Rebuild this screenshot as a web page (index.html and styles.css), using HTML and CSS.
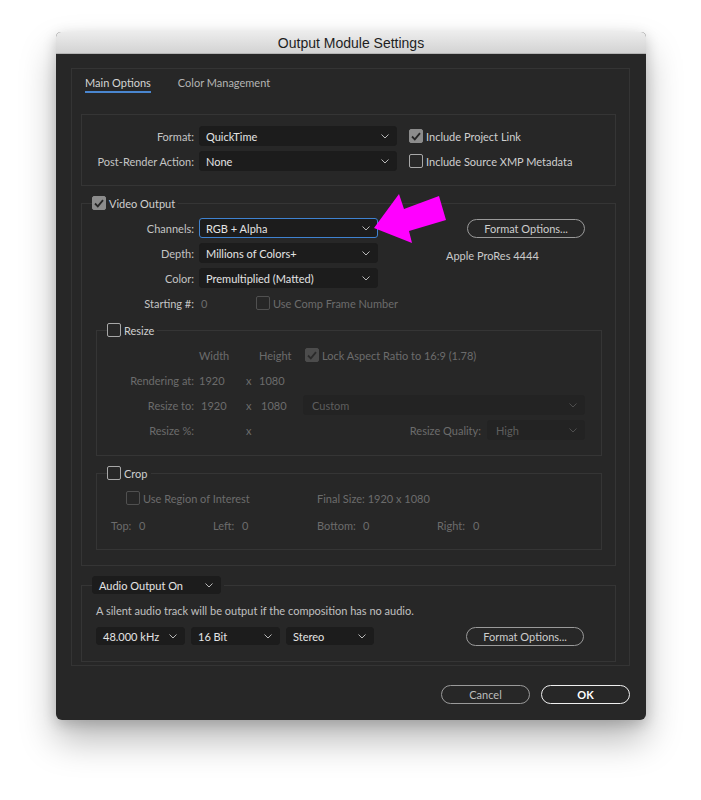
FILE: index.html
```html
<!DOCTYPE html>
<html>
<head>
<meta charset="utf-8">
<link rel="stylesheet" href="styles.css">
</head>
<body>
<div class="window">
  <div class="titlebar">Output Module Settings</div>
  <div class="wbody">
    <div class="panel">
      <div class="tabs">
        <span class="tab active">Main Options</span>
        <span class="tab">Color Management</span>
      </div>

      <div class="box1">
        <div class="row">
          <span class="lbl w112">Format:</span>
          <div class="select w198"><span>QuickTime</span><svg class="chev" width="8" height="5" viewBox="0 0 8 5"><polyline points="0.5,0.5 4,4 7.5,0.5"/></svg></div>
          <span class="cb checked ml12"><svg width="10" height="9" viewBox="0 0 10 9"><polyline points="1,4.5 3.8,7.3 9,1.2"/></svg></span>
          <span class="cbtext">Include Project Link</span>
        </div>
        <div class="row mt5">
          <span class="lbl w112">Post-Render Action:</span>
          <div class="select w198"><span>None</span><svg class="chev" width="8" height="5" viewBox="0 0 8 5"><polyline points="0.5,0.5 4,4 7.5,0.5"/></svg></div>
          <span class="cb ml12"></span>
          <span class="cbtext">Include Source XMP Metadata</span>
        </div>
      </div>

      <fieldset class="fs video">
        <legend class="lg">
          <span class="cb checked"><svg width="10" height="9" viewBox="0 0 10 9"><polyline points="1,4.5 3.8,7.3 9,1.2"/></svg></span>
          <span class="cbtext">Video Output</span>
        </legend>
        <div class="vo-top">
          <div class="vo-left">
            <div class="row">
              <span class="lbl w102">Channels:</span>
              <div class="select w179 focus"><span>RGB + Alpha</span><svg class="chev" width="8" height="5" viewBox="0 0 8 5"><polyline points="0.5,0.5 4,4 7.5,0.5"/></svg></div>
            </div>
            <div class="row mt5">
              <span class="lbl w102">Depth:</span>
              <div class="select w179"><span>Millions of Colors+</span><svg class="chev" width="8" height="5" viewBox="0 0 8 5"><polyline points="0.5,0.5 4,4 7.5,0.5"/></svg></div>
            </div>
            <div class="row mt5">
              <span class="lbl w102">Color:</span>
              <div class="select w179"><span>Premultiplied (Matted)</span><svg class="chev" width="8" height="5" viewBox="0 0 8 5"><polyline points="0.5,0.5 4,4 7.5,0.5"/></svg></div>
            </div>
            <div class="row mt5">
              <span class="lbl w102">Starting #:</span>
              <span class="dim start0">0</span>
              <span class="cb dis"></span>
              <span class="cbtext dim">Use Comp Frame Number</span>
            </div>
          </div>
          <div class="vo-right">
            <div class="btn fmt">Format Options...</div>
            <div class="prores">Apple ProRes 4444</div>
          </div>
        </div>

        <fieldset class="fs sub resize">
          <legend class="lg">
            <span class="cb"></span>
            <span class="cbtext">Resize</span>
          </legend>
          <div class="row">
            <span class="lbl w87"></span>
            <span class="c-w dim">Width</span>
            <span class="c-x"></span>
            <span class="c-h dim">Height</span>
            <span class="cb dis checked"><svg width="10" height="9" viewBox="0 0 10 9"><polyline points="1,4.5 3.8,7.3 9,1.2"/></svg></span>
            <span class="cbtext dim">Lock Aspect Ratio to 16:9 (1.78)</span>
          </div>
          <div class="row mt5">
            <span class="lbl w87 dim">Rendering at:</span>
            <span class="c-w dim">1920</span>
            <span class="c-x dim">x</span>
            <span class="c-h dim">1080</span>
          </div>
          <div class="row mt5">
            <span class="lbl w87 dim">Resize to:</span>
            <span class="c-w dim in">1920</span>
            <span class="c-x dim">x</span>
            <span class="c-h dim in">1080</span>
            <div class="select dsel custom"><span>Custom</span><svg class="chev" width="8" height="5" viewBox="0 0 8 5"><polyline points="0.5,0.5 4,4 7.5,0.5"/></svg></div>
          </div>
          <div class="row mt5">
            <span class="lbl w87 dim">Resize %:</span>
            <span class="c-w"></span>
            <span class="c-x dim">x</span>
            <span class="lbl rq dim">Resize Quality:</span>
            <div class="select dsel high"><span>High</span><svg class="chev" width="8" height="5" viewBox="0 0 8 5"><polyline points="0.5,0.5 4,4 7.5,0.5"/></svg></div>
          </div>
        </fieldset>

        <fieldset class="fs sub crop">
          <legend class="lg">
            <span class="cb"></span>
            <span class="cbtext">Crop</span>
          </legend>
          <div class="row">
            <div class="roi">
              <span class="cb dis"></span>
              <span class="cbtext dim">Use Region of Interest</span>
            </div>
            <span class="dim">Final Size: 1920 x 1080</span>
          </div>
          <div class="row mt7">
            <div class="ci ci1"><span class="cl l1 dim">Top:</span><span class="dim">0</span></div>
            <div class="ci ci2"><span class="cl l2 dim">Left:</span><span class="dim">0</span></div>
            <div class="ci ci3"><span class="cl l3 dim">Bottom:</span><span class="dim">0</span></div>
            <div class="ci"><span class="cl l4 dim">Right:</span><span class="dim">0</span></div>
          </div>
        </fieldset>
      </fieldset>

      <fieldset class="fs audio">
        <legend class="lg">
          <div class="select asel"><span>Audio Output On</span><svg class="chev" width="8" height="5" viewBox="0 0 8 5"><polyline points="0.5,0.5 4,4 7.5,0.5"/></svg></div>
        </legend>
        <div class="silent">A silent audio track will be output if the composition has no audio.</div>
        <div class="row arow">
          <div class="select sm w89"><span>48.000 kHz</span><svg class="chev" width="8" height="5" viewBox="0 0 8 5"><polyline points="0.5,0.5 4,4 7.5,0.5"/></svg></div>
          <div class="select sm w89 ml6"><span>16 Bit</span><svg class="chev" width="8" height="5" viewBox="0 0 8 5"><polyline points="0.5,0.5 4,4 7.5,0.5"/></svg></div>
          <div class="select sm w88 ml6"><span>Stereo</span><svg class="chev" width="8" height="5" viewBox="0 0 8 5"><polyline points="0.5,0.5 4,4 7.5,0.5"/></svg></div>
          <div class="btn fmt2">Format Options...</div>
        </div>
      </fieldset>
    </div>
    <div class="buttons">
      <div class="btn cancel">Cancel</div>
      <div class="btn ok">OK</div>
    </div>
  </div>
</div>
<svg class="arrow" width="701" height="800" viewBox="0 0 701 800">
  <polygon points="374,228 399,194 404,209 439,196 446,220 409,231 412,243" fill="#ff00ff"/>
</svg>
</body>
</html>
```
FILE: styles.css
```css
* { box-sizing: border-box; }
html, body { margin: 0; padding: 0; background: #ffffff; }
body {
  font-family: "Lato", "Open Sans", sans-serif;
  font-size: 11px;
  color: #c4c4c4;
  position: relative;
  width: 701px;
  height: 800px;
  overflow: hidden;
}
.window {
  margin: 32px 0 0 56px;
  width: 590px;
  height: 688px;
  background: #272727;
  border-radius: 5px 5px 6px 6px;
  overflow: hidden;
  box-shadow: 0 20px 36px rgba(0,0,0,0.28), 0 4px 14px rgba(0,0,0,0.18);
}
.titlebar {
  height: 22px;
  background: linear-gradient(#ececec, #d3d3d3);
  border-bottom: 1px solid #b4b4b4;
  text-align: center;
  font-family: "Liberation Sans", "Arial", sans-serif;
  font-size: 14px;
  line-height: 22px;
  color: #1e1e1e;
}
.wbody { padding: 14px 16px 0 15px; }
.panel {
  width: 559px;
  border: 1px solid #343434;
  padding: 0 13px 3px 9px;
}
.tabs { display: flex; padding: 6px 0 0 4px; line-height: 16px; height: 24px; }
.tab { color: #b4b4b4; margin-right: 27px; }
.tab.active { color: #d4d4d4; border-bottom: 2px solid #4a86cf; height: 18px; }

.row { display: flex; align-items: center; height: 20px; white-space: nowrap; }
.row > * { flex: none; }
.mt5 { margin-top: 5px; }
.mt7 { margin-top: 7px; }
.ml12 { margin-left: 12px; }
.ml6 { margin-left: 6px; }
.lbl { text-align: right; margin-right: 5px; flex: none; }
.w112 { width: 112px; }
.w102 { width: 102px; }
.w87 { width: 87px; }

.box1 {
  margin-top: 21px;
  width: 535px;
  border: 1px solid #353535;
  padding: 11px 0 14px 0;
}
.select {
  display: flex;
  align-items: center;
  justify-content: space-between;
  height: 20px;
  background: #1c1c1c;
  border: 1px solid #1c1c1c;
  border-radius: 3px;
  padding: 0 7px 0 6px;
  color: #e4e4e4;
  flex: none;
}
.select.focus { border-color: #3f82d0; }
.chev { fill: none; stroke: #b8b8b8; stroke-width: 1; flex: none; }
.w198 { width: 198px; }
.w179 { width: 179px; }
.w89 { width: 89px; }
.w88 { width: 88px; }

.cb {
  display: inline-flex;
  align-items: center;
  justify-content: center;
  width: 14px;
  height: 14px;
  border: 1.5px solid #a8a8a8;
  border-radius: 2px;
  flex: none;
}
.cb.checked { background: #8c8c8c; border-color: #8c8c8c; }
.cb svg polyline { fill: none; stroke: #262626; stroke-width: 1.8; }
.cb.dis { border-color: #505050; }
.cb.dis.checked { background: #4c4c4c; border-color: #4c4c4c; }
.cb.dis.checked svg polyline { stroke: #2a2a2a; }
.cbtext { margin-left: 3px; color: #cfcfcf; }
.dim, .cbtext.dim { color: #6c6c6c; }

.fs {
  margin: 0;
  border: 1px solid #353535;
  min-width: 0;
}
.lg {
  padding: 0 3px 0 0;
  display: flex;
  align-items: center;
  height: 14px;
}
.video {
  margin-top: 10px;
  width: 535px;
  padding: 8px 13px 15px 10px;
}
.vo-top { display: flex; }
.vo-left { width: 286px; flex: none; }
.start0 { width: 57px; padding-left: 2px; }
.vo-right { margin-left: 68px; }
.btn {
  display: flex;
  align-items: center;
  justify-content: center;
  border: 1.5px solid #9a9a9a;
  border-radius: 10px;
  color: #cdcdcd;
  height: 19px;
}
.fmt { margin: 1px 0 0 21px; width: 118px; }
.prores { margin-top: 10px; line-height: 16px; color: #cacaca; }

.sub {
  margin-top: 10px;
  margin-left: 4px;
  width: 506px;
  padding: 8px 0 15px 10px;
}
.crop { padding-bottom: 14px; }
.c-w { width: 47px; }
.c-x { width: 13px; }
.c-h { width: 46px; }
.in { padding-left: 2px; }
.custom { margin-left: -2px; width: 282px; }
.dsel { background: #232323; border-color: #232323; color: #5e5e5e; padding-left: 8px; }
.dsel .chev { stroke: #4e4e4e; }
.rq { width: 222px; margin-right: 6px; }
.high { width: 98px; }

.roi { display: flex; align-items: center; margin-left: 19px; width: 191px; }
.ci { display: flex; }
.ci1 { margin-left: 4px; width: 102px; }
.ci2 { width: 104px; }
.ci3 { width: 120px; }
.cl { display: inline-block; }
.l1 { width: 28px; }
.l2 { width: 29px; }
.l3 { width: 46px; }
.l4 { width: 36px; }

.audio {
  margin-top: 10px;
  width: 535px;
  padding: 9px 13px 16px 10px;
}
.audio .lg { height: 18px; }
.asel { width: 129px; height: 18px; padding-left: 6px; }
.sm { height: 18px; }
.silent { margin-left: 4px; line-height: 16px; color: #c0c0c0; }
.arow { margin-top: 8px; margin-left: 4px; height: 18px; }
.fmt2 { margin-left: 92px; width: 118px; }

.buttons {
  display: flex;
  justify-content: flex-end;
  width: 559px;
  margin-top: 19px;
}
.cancel { width: 89px; color: #bdbdbd; }
.ok { width: 89px; margin-left: 11px; border-color: #efefef; color: #ffffff; font-weight: bold; }

.arrow { position: absolute; left: 0; top: 0; pointer-events: none; }
```
